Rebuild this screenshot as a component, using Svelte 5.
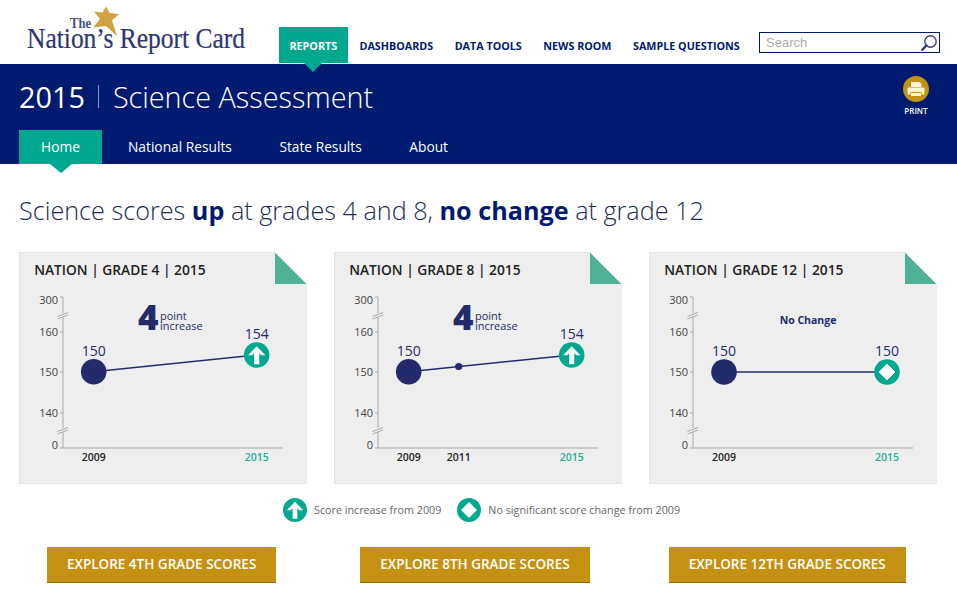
<script lang="ts">
  const mainNav = ['Dashboards', 'Data Tools', 'News Room', 'Sample Questions'];
  const subNav = ['National Results', 'State Results', 'About'];

  const ticks = [
    { label: '300', y: 45, textY: 52 },
    { label: '160', y: 80, textY: 84 },
    { label: '150', y: 120, textY: 124 },
    { label: '140', y: 161, textY: 165 },
    { label: '0', y: 196, textY: 197 }
  ];

  const cards = [
    {
      title: ['NATION', 'GRADE 4', '2015'],
      x: [74.7, 237.7],
      y: [119.7, 103],
      values: ['150', '154'],
      mid: null,
      points: 4,
      icon: 'up',
      button: 'Explore 4th Grade Scores'
    },
    {
      title: ['NATION', 'GRADE 8', '2015'],
      x: [74.7, 237.7],
      y: [119.7, 103],
      values: ['150', '154'],
      mid: { x: 124.7, y: 114.5 },
      points: 4,
      icon: 'up',
      button: 'Explore 8th Grade Scores'
    },
    {
      title: ['NATION', 'GRADE 12', '2015'],
      x: [75, 238],
      y: [120, 120],
      values: ['150', '150'],
      mid: null,
      points: null,
      icon: 'same',
      button: 'Explore 12th Grade Scores'
    }
  ];
</script>

{#snippet badge(kind, cx, cy, r)}
  <circle cx={cx} cy={cy} r={r} fill="#00a88f" />
  {#if kind === 'up'}
    <path
      d={`M${cx} ${cy - r * 0.68} L${cx + r * 0.68} ${cy + r * 0.02} L${cx + r * 0.36} ${cy + r * 0.02} L${cx + r * 0.2} ${cy - r * 0.14} L${cx + r * 0.2} ${cy + r * 0.72} L${cx - r * 0.2} ${cy + r * 0.72} L${cx - r * 0.2} ${cy - r * 0.14} L${cx - r * 0.36} ${cy + r * 0.02} L${cx - r * 0.68} ${cy + r * 0.02} Z`}
      fill="#fff"
    />
  {:else}
    <path
      d={`M${cx} ${cy - r * 0.62} L${cx + r * 0.62} ${cy} L${cx} ${cy + r * 0.62} L${cx - r * 0.62} ${cy} Z`}
      fill="#fff"
      stroke="#fff"
      stroke-linejoin="round"
      stroke-width="1"
    />
  {/if}
{/snippet}

<div class="page">
  <header class="top">
    <svg class="logo" viewBox="0 0 279 64" role="img" aria-label="The Nation's Report Card">
      <path d="M106 6.5 L109.6 13 L119 14 L112 20.5 L117 36 L106 26 L93 27.5 L100 19 L94 11.5 L102.5 12.5 Z" fill="#d0a242" />
      <text x="70" y="28" class="logo-the" textLength="21" lengthAdjust="spacingAndGlyphs">The</text>
      <text x="27" y="48" class="logo-name" textLength="218" lengthAdjust="spacingAndGlyphs">Nation’s Report Card</text>
    </svg>

    <nav class="main-nav">
      <a class="current" href="#reports">Reports</a>
      {#each mainNav as item}
        <a href="#nav">{item}</a>
      {/each}
    </nav>

    <div class="search">
      <span>Search</span>
      <svg viewBox="0 0 18 18" width="18" height="18" aria-hidden="true">
        <circle cx="10.5" cy="7.5" r="5.7" fill="none" stroke="#3a4278" stroke-width="1.4" />
        <path d="M6.4 11.6 L2.2 15.8" stroke="#3a4278" stroke-width="2.4" stroke-linecap="round" />
      </svg>
    </div>
  </header>

  <section class="band">
    <div class="band-head">
      <h1><span class="year">2015</span><span class="rule"></span>Science Assessment</h1>
      <div class="print">
        <svg viewBox="0 0 26 26" width="26" height="26" aria-hidden="true">
          <circle cx="13" cy="13" r="13" fill="#c49112" />
          <path d="M8 6 H16.5 L18.5 8 V11 H8 Z" fill="#fbf3df" />
          <path d="M5.5 11.5 H20.5 Q21.5 11.5 21.5 12.5 V18.5 H18.5 V16 H7.5 V18.5 H4.5 V12.5 Q4.5 11.5 5.5 11.5 Z" fill="#fbf3df" />
          <rect x="8" y="17" width="10" height="3" fill="#fbf3df" />
        </svg>
        <span>PRINT</span>
      </div>
    </div>
    <nav class="sub-nav">
      <a class="current" href="#home">Home</a>
      {#each subNav as item}
        <a href="#sub">{item}</a>
      {/each}
    </nav>
  </section>

  <main>
    <h2>Science scores <b>up</b> at grades 4 and 8, <b>no change</b> at grade 12</h2>

    <div class="cards">
      {#each cards as card}
        <article class="card">
          <h3>{card.title[0]} | {card.title[1]} | {card.title[2]}</h3>
          <span class="fold"></span>
          <svg class="chart" viewBox="0 0 288 232" aria-hidden="true">
            <g class="axis">
              <path d="M44 45 V61 M44 65 V176 M44 180 V196 H264" />
              {#each ticks as t}
                <path d={`M41 ${t.y} H44`} />
              {/each}
              <path d="M38.5 64.5 L49 60.5 M38.5 67 L49 63 M38.5 179.5 L49 175.5 M38.5 182 L49 178" />
            </g>
            {#each ticks as t}
              <text class="tick" x="39" y={t.textY}>{t.label}</text>
            {/each}

            <line x1={card.x[0]} y1={card.y[0]} x2={card.x[1]} y2={card.y[1]} class="trend" />
            {#if card.mid}
              <circle cx={card.mid.x} cy={card.mid.y} r="3.6" fill="#232b6b" />
              <text class="year-label" x={card.mid.x} y="209">2011</text>
            {/if}
            <circle cx={card.x[0]} cy={card.y[0]} r="12.8" fill="#232b6b" />
            {@render badge(card.icon, card.x[1], card.y[1], 12.8)}

            <text class="value" x={card.x[0]} y={card.y[0] - 16}>{card.values[0]}</text>
            <text class="value" x={card.x[1]} y={card.y[1] - 16}>{card.values[1]}</text>

            <text class="year-label" x={card.x[0]} y="209">2009</text>
            <text class="year-label teal" x={card.x[1]} y="209">2015</text>

            {#if card.points}
              <text class="big" x="119" y="78">{card.points}</text>
              <text class="small" x="141" y="67.5">point</text>
              <text class="small" x="141" y="78">increase</text>
            {:else}
              <text class="nochange" x="159" y="72">No Change</text>
            {/if}
          </svg>
        </article>
      {/each}
    </div>

    <div class="legend">
      <svg viewBox="0 0 24 24" width="24" height="24" aria-hidden="true">{@render badge('up', 12, 12, 12)}</svg>
      <span>Score increase from 2009</span>
      <svg viewBox="0 0 24 24" width="24" height="24" aria-hidden="true">{@render badge('same', 12, 12, 12)}</svg>
      <span>No significant score change from 2009</span>
    </div>

    <div class="buttons">
      {#each cards as card}
        <a class="explore" href="#explore">{card.button}</a>
      {/each}
    </div>
  </main>
</div>

<style>
  :global(body) {
    background: #fff;
    font-family: 'Open Sans', sans-serif;
    margin: 0;
  }

  .page {
    height: 601px;
    overflow: hidden;
    width: 957px;
  }

  a {
    color: inherit;
    text-decoration: none;
  }

  .top {
    align-items: flex-start;
    display: flex;
    height: 64px;
  }

  .logo {
    flex: none;
    height: 64px;
    overflow: visible;
    width: 279px;
  }

  .logo-the,
  .logo-name {
    fill: #2d3574;
    font-family: 'Liberation Serif', serif;
    stroke: #2d3574;
    stroke-width: 0.2;
  }

  .logo-the {
    fill: #4a5085;
    font-size: 15px;
    font-weight: 700;
    stroke: none;
  }

  .logo-name {
    font-size: 29px;
  }

  .main-nav {
    align-items: stretch;
    display: flex;
    flex: none;
    margin-top: 27px;
    width: 480px;
  }

  .main-nav a {
    align-items: center;
    box-sizing: border-box;
    color: #001a70;
    display: flex;
    font-size: 10.75px;
    font-weight: 700;
    height: 36px;
    padding: 1px 10.75px 0;
    text-transform: uppercase;
    white-space: nowrap;
  }

  .main-nav a.current {
    background: #00a88f;
    color: #fff;
    margin-right: 1px;
    padding: 1px 10.5px 0;
    position: relative;
  }

  .main-nav a.current::after {
    border-left: 9px solid transparent;
    border-right: 9px solid transparent;
    border-top: 9px solid #00a88f;
    content: '';
    left: 50%;
    margin-left: -9px;
    position: absolute;
    top: 36px;
    z-index: 2;
  }

  .search {
    align-items: center;
    border: 1px solid #001a70;
    box-sizing: border-box;
    display: flex;
    flex: none;
    height: 21px;
    justify-content: space-between;
    margin-top: 32px;
    padding: 0 1px 0 6px;
    width: 181px;
  }

  .search span {
    color: #aaa;
    font-family: 'Liberation Sans', sans-serif;
    font-size: 13px;
  }

  .band {
    background: #001a70;
    color: #fff;
    height: 100px;
  }

  .band-head {
    display: flex;
    height: 66px;
    justify-content: space-between;
    padding: 0 28px 0 19px;
  }

  h1 {
    align-items: center;
    display: flex;
    font-size: 28.8px;
    font-weight: 300;
    height: 64px;
    margin: 0;
  }

  .year {
    font-weight: 400;
  }

  .rule {
    background: #8d97bf;
    height: 23px;
    margin: 0 13.5px;
    width: 1px;
  }

  .print {
    align-items: center;
    display: flex;
    flex-direction: column;
    font-size: 8px;
    font-weight: 600;
    gap: 3px;
    padding-top: 12px;
  }

  .sub-nav {
    display: flex;
    gap: 47.5px;
    padding-left: 19px;
  }

  .sub-nav a {
    align-items: center;
    display: flex;
    font-size: 13.75px;
    height: 33px;
    white-space: nowrap;
  }

  .sub-nav a.current {
    background: #00a88f;
    box-sizing: border-box;
    height: 34px;
    justify-content: center;
    margin-right: -21.5px;
    padding-bottom: 1px;
    position: relative;
    width: 83px;
  }

  .sub-nav a.current::after {
    border-left: 11px solid transparent;
    border-right: 11px solid transparent;
    border-top: 9px solid #00a88f;
    content: '';
    left: 50%;
    margin-left: -11px;
    position: absolute;
    top: 34px;
  }

  main {
    padding: 0 19px;
  }

  h2 {
    color: #222d4f;
    font-size: 25.2px;
    font-weight: 300;
    line-height: 34px;
    margin: 29px 0 0;
    white-space: nowrap;
  }

  h2 b {
    color: #001a70;
    font-weight: 700;
  }

  .cards {
    display: flex;
    gap: 27.5px;
    margin-top: 25px;
  }

  .card {
    background: #efeeee;
    box-shadow: inset 0 0 0 1px #e4e4e4;
    clip-path: polygon(0 0, calc(100% - 32px) 0, 100% 32px, 100% 100%, 0 100%);
    flex: none;
    height: 232px;
    overflow: hidden;
    position: relative;
    width: 287.5px;
  }

  .card h3 {
    color: #222;
    font-size: 13.75px;
    font-weight: 600;
    left: 15.2px;
    line-height: 20px;
    margin: 0;
    position: absolute;
    top: 8px;
  }

  .fold {
    background: linear-gradient(to top right, #4fb196 50%, transparent 50%);
    height: 32px;
    position: absolute;
    right: 0;
    top: 0;
    width: 32px;
  }

  .chart {
    display: block;
    height: 232px;
    width: 288px;
  }

  .axis path {
    fill: none;
    stroke: #a9a9a9;
    stroke-width: 1;
  }

  .tick {
    fill: #444;
    font-size: 11px;
    text-anchor: end;
  }

  .trend {
    stroke: #232b6b;
    stroke-width: 1.5;
  }

  .value {
    fill: #232b6b;
    font-size: 14px;
    text-anchor: middle;
  }

  .year-label {
    fill: #222;
    font-size: 10.5px;
    font-weight: 600;
    text-anchor: middle;
  }

  .year-label.teal {
    fill: #1cae99;
  }

  .big {
    fill: #232b6b;
    font-size: 35px;
    font-weight: 800;
  }

  .small {
    fill: #232b6b;
    font-size: 10.9px;
  }

  .nochange {
    fill: #232b6b;
    font-size: 10.5px;
    font-weight: 700;
    text-anchor: middle;
  }

  .legend {
    align-items: center;
    color: #666;
    display: flex;
    font-size: 10.75px;
    height: 24px;
    margin-top: 14px;
    padding-left: 264px;
  }

  .legend span {
    margin-left: 7px;
    margin-right: 16px;
  }

  .buttons {
    display: flex;
    margin-top: 25px;
    padding-left: 28px;
  }

  .explore {
    background: #c49112;
    border-bottom: 1px solid #8f6a0d;
    color: #fff;
    font-size: 13.5px;
    font-weight: 600;
    line-height: 34px;
    padding: 0 20px 1px;
    text-transform: uppercase;
    white-space: nowrap;
  }

  .explore:nth-child(2) {
    margin-left: 84px;
  }

  .explore:nth-child(3) {
    margin-left: 79px;
  }
</style>
